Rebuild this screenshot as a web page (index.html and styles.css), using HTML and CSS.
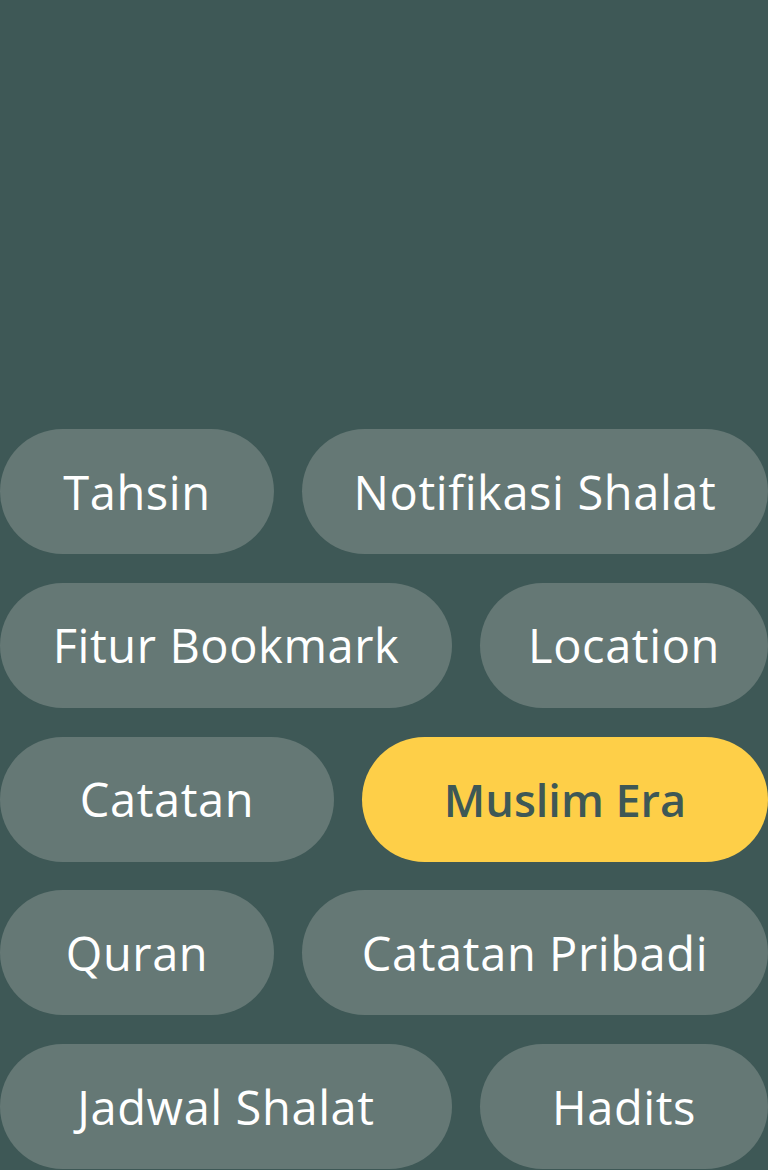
FILE: index.html
```html
<!DOCTYPE html>
<html lang="id">
<head>
<meta charset="utf-8">
<title>Fitur</title>
<link rel="stylesheet" href="styles.css">
</head>
<body>
<main class="screen">
  <div class="chips">
    <div class="row">
      <span class="chip w274">Tahsin</span>
      <span class="chip grow">Notifikasi Shalat</span>
    </div>
    <div class="row">
      <span class="chip w452">Fitur Bookmark</span>
      <span class="chip grow">Location</span>
    </div>
    <div class="row">
      <span class="chip w334">Catatan</span>
      <span class="chip grow active">Muslim Era</span>
    </div>
    <div class="row">
      <span class="chip w274">Quran</span>
      <span class="chip grow">Catatan Pribadi</span>
    </div>
    <div class="row">
      <span class="chip w452">Jadwal Shalat</span>
      <span class="chip grow">Hadits</span>
    </div>
  </div>
</main>
</body>
</html>
```

FILE: styles.css
```css
html, body {
  margin: 0;
  padding: 0;
  background: #3e5856;
}
.screen {
  width: 768px;
  height: 1170px;
  display: flex;
  flex-direction: column;
  justify-content: flex-start;
  padding-top: 429px;
  box-sizing: border-box;
  overflow: hidden;
}
.chips {
  display: flex;
  flex-direction: column;
  gap: 28.75px;
}
.row {
  display: flex;
  gap: 28px;
  height: 125px;
}
.chip {
  display: flex;
  align-items: center;
  justify-content: center;
  height: 125px;
  border-radius: 63px;
  background: #657875;
  color: #ffffff;
  font-family: "Open Sans", "Noto Sans", sans-serif;
  font-size: 47px;
  letter-spacing: 0.6px;
  font-weight: 400;
  white-space: nowrap;
  flex: 0 0 auto;
}
.w274 { width: 274px; }
.w334 { width: 334px; }
.w452 { width: 452px; }
.grow { flex: 1 1 auto; }
.active {
  background: #fecf48;
  color: #3e5856;
  font-weight: 600;
  font-size: 45px;
  letter-spacing: 0;
}
```
